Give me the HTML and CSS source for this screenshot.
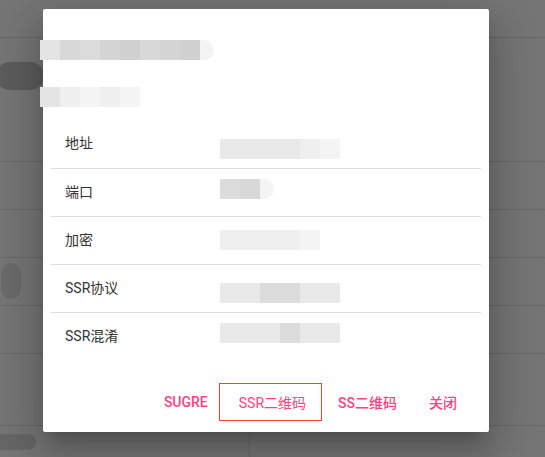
FILE: index.html
```html
<!DOCTYPE html>
<html lang="zh-CN">
<head>
    <meta charset="UTF-8">
    <meta name="viewport" content="width=device-width, initial-scale=1.0">
    <title>节点详情</title>
    <link rel="stylesheet" href="styles.css">
</head>
<body>

<!-- page behind the dialog, dimmed -->
<div class="page">
    <div class="page-row r-top"></div>
    <div class="page-row r-head"><span class="avatar"></span></div>
    <div class="page-row"></div>
    <div class="page-row"></div>
    <div class="page-row"><span class="chip"></span></div>
    <div class="page-row"></div>
    <div class="page-row r-tall"></div>
    <div class="page-foot"><span class="foot-block"></span><span class="foot-col"></span></div>
</div>

<div class="dialog">
    <div class="dialog-title">
        <div class="mask mask-name">
            <i class="s2"></i><i class="s4"></i><i class="s3"></i><i class="s5"></i><i class="s6"></i><i class="s4"></i><i class="s5"></i><i class="s6"></i><b class="tail"></b>
        </div>
        <div class="mask mask-sub">
            <i class="s2"></i><i class="s8"></i><i class="s9"></i><i class="s8"></i><i class="s9"></i>
        </div>
    </div>

    <table class="info">
        <tr>
            <td class="label">地址</td>
            <td><div class="mask mask-val v-low"><i class="s7"></i><i class="s7"></i><i class="s7"></i><i class="s7"></i><i class="s8"></i><i class="s9"></i></div></td>
        </tr>
        <tr>
            <td class="label">端口</td>
            <td><div class="mask mask-val v-high"><i class="s3"></i><i class="s4"></i><b class="tail"></b></div></td>
        </tr>
        <tr>
            <td class="label">加密</td>
            <td><div class="mask mask-val"><i class="s8"></i><i class="s8"></i><i class="s8"></i><i class="s8"></i><i class="s9"></i></div></td>
        </tr>
        <tr>
            <td class="label">SSR协议</td>
            <td><div class="mask mask-val v-low"><i class="s7"></i><i class="s7"></i><i class="s3"></i><i class="s3"></i><i class="s7"></i><i class="s7"></i></div></td>
        </tr>
        <tr>
            <td class="label">SSR混淆</td>
            <td><div class="mask mask-val v-high"><i class="s7"></i><i class="s7"></i><i class="s7"></i><i class="s3"></i><i class="s7"></i><i class="s7"></i></div></td>
        </tr>
    </table>

    <div class="dialog-actions">
        <button class="btn">SUGRE</button>
        <button class="btn focused">SSR二维码</button>
        <button class="btn">SS二维码</button>
        <button class="btn">关闭</button>
    </div>
</div>

</body>
</html>
```

FILE: styles.css
```css
/* Global */
* {
    box-sizing: border-box;
    margin: 0;
    padding: 0;
}
body {
    width: 545px;
    height: 457px;
    overflow: hidden;
    background-color: #757575;
    font-family: Roboto, "Noto Sans CJK SC", sans-serif;
    font-size: 14px;
    position: relative;
}

/* Dimmed page behind */
.page {
    width: 100%;
}
.page-row {
    height: 48px;
    border-bottom: 1px solid #676767;
    position: relative;
}
.page-row.r-top {
    height: 38px;
}
.page-row.r-head {
    height: 124px;
}
.page-row.r-tall {
    height: 72px;
}
.avatar {
    position: absolute;
    left: -4px;
    top: 24px;
    width: 48px;
    height: 28px;
    border-radius: 14px;
    background-color: #5c5c5c;
}
.chip {
    position: absolute;
    left: 1px;
    top: 5px;
    width: 20px;
    height: 36px;
    border-radius: 10px;
    background-color: #6a6a6a;
}
.page-foot {
    position: relative;
    height: 40px;
}
.foot-block {
    position: absolute;
    left: 0;
    top: 8px;
    width: 36px;
    height: 16px;
    border-radius: 0 8px 8px 0;
    background-color: #666;
}
.foot-col {
    position: absolute;
    left: 249px;
    top: 0;
    width: 1px;
    height: 40px;
    background-color: #6a6a6a;
}

/* Dialog */
.dialog {
    position: absolute;
    left: 43px;
    top: 9px;
    width: 446px;
    height: 423px;
    background-color: #fff;
    border-radius: 2px;
    padding: 0 8px;
    box-shadow: 0 11px 15px -7px rgba(0, 0, 0, 0.2),
                0 24px 38px 3px rgba(0, 0, 0, 0.14),
                0 9px 46px 8px rgba(0, 0, 0, 0.12);
}
.dialog-title {
    height: 111px;
    padding-top: 31px;
    margin-left: -11px;
}

/* pixelated masks over private values */
.mask {
    display: flex;
    align-items: center;
}
.mask i {
    display: block;
    width: 20px;
    height: 20px;
}
.mask .tail {
    display: block;
    width: 14px;
    height: 20px;
    border-radius: 0 10px 10px 0;
    background-color: #f4f4f4;
}
.mask-sub {
    margin-top: 27px;
}
.s2 { background-color: #e4e4e4; }
.s3 { background-color: #dcdcdc; }
.s4 { background-color: #d8d8d8; }
.s5 { background-color: #d4d4d4; }
.s6 { background-color: #d0d0d0; }
.s7 { background-color: #e8e8e8; }
.s8 { background-color: #efefef; }
.s9 { background-color: #f4f4f4; }

/* Info table */
.info {
    width: 100%;
    border-collapse: collapse;
}
.info tr {
    height: 48px;
    border-bottom: 1px solid #dcdcdc;
}
.info tr:last-child {
    border-bottom: none;
}
.info td {
    padding: 0;
    vertical-align: middle;
}
.info td.label {
    width: 169px;
    padding: 0 0 3px 14px;
    color: #333;
}
.v-low {
    margin-top: 10px;
}
.v-high {
    margin-top: -6px;
}

/* Actions */
.dialog-actions {
    display: flex;
    justify-content: flex-end;
    align-items: center;
    margin-top: 23px;
    padding-right: 8px;
}
.btn {
    height: 38px;
    padding: 0 16px;
    border: none;
    background: none;
    color: #ff4081;
    font-family: Roboto, "Noto Sans CJK SC", sans-serif;
    font-size: 14px;
    font-weight: 500;
    cursor: pointer;
}
.btn.focused {
    border: 1px solid #f44336;
    padding: 0 15px 0 19px;
    margin-left: -5px;
    font-weight: 400;
}
```
